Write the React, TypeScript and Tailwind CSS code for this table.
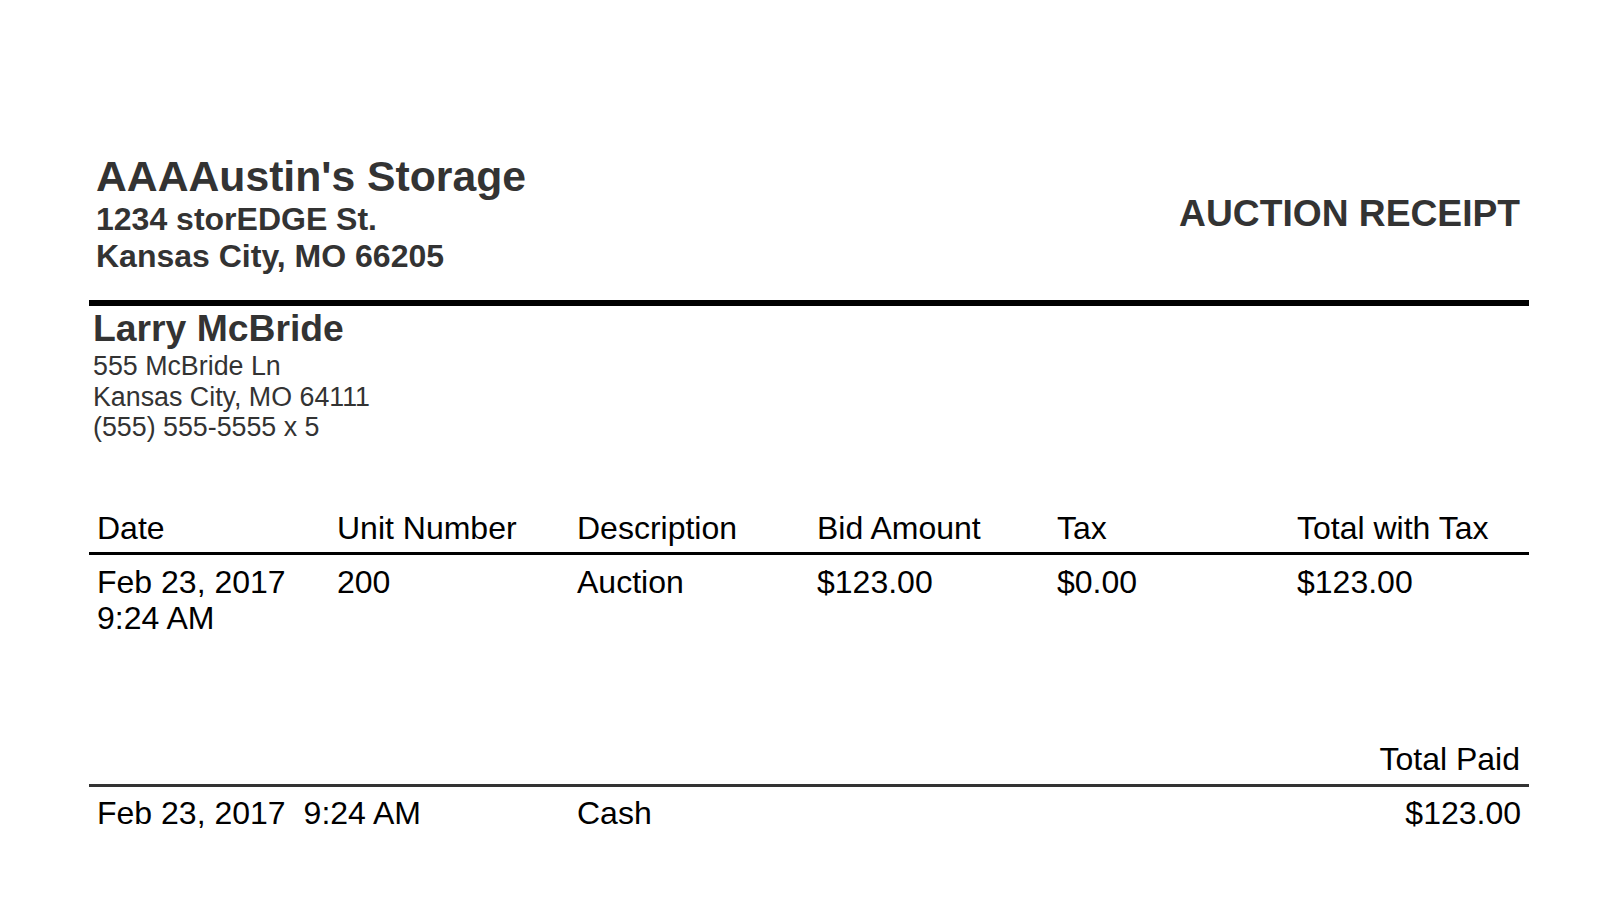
export default function App() {
  const headers = ['Date', 'Unit Number', 'Description', 'Bid Amount', 'Tax', 'Total with Tax'];

  const item = {
    date: 'Feb 23, 2017',
    time: '9:24 AM',
    unit: '200',
    description: 'Auction',
    bid: '$123.00',
    tax: '$0.00',
    total: '$123.00'
  };

  return (
    <div className="min-h-screen bg-white font-['Liberation_Sans',Arial,sans-serif] pl-[89px] pr-[87px] pt-[152px]">
      {/* facility header */}
      <div className="flex justify-between items-start">
        <div className="pl-[7px] text-[#333] font-bold">
          <h1 className="text-[42.7px] leading-[48px]">AAAAustin's Storage</h1>
          <div className="text-[32px] leading-[36.5px] mt-[1px]">1234 storEDGE St.</div>
          <div className="text-[32px] leading-[36.5px]">Kansas City, MO 66205</div>
        </div>
        <h2 className="mt-[41px] pr-[9px] text-[37.2px] leading-[40px] font-bold text-[#333]">AUCTION RECEIPT</h2>
      </div>

      {/* customer */}
      <div className="mt-[26px] border-t-[6px] border-black pl-[4px] pt-[2px] text-[#333]">
        <div className="text-[37.3px] leading-[40px] font-bold">Larry McBride</div>
        <div className="text-[26.8px] leading-[30.5px] mt-[3px]">
          <div>555 McBride Ln</div>
          <div>Kansas City, MO 64111</div>
          <div>(555) 555-5555 x 5</div>
        </div>
      </div>

      {/* items */}
      <div className="mt-[67px] text-[32px] leading-[36px] text-black">
        <div className="grid grid-cols-6 border-b-[3px] border-black pb-[6px]">
          {headers.map((h) => (
            <div key={h} className="px-[8px]">{h}</div>
          ))}
        </div>
        <div className="grid grid-cols-6 pt-[9px]">
          <div className="px-[8px]">
            <div>{item.date}</div>
            <div>{item.time}</div>
          </div>
          <div className="px-[8px]">{item.unit}</div>
          <div className="px-[8px]">{item.description}</div>
          <div className="px-[8px]">{item.bid}</div>
          <div className="px-[8px]">{item.tax}</div>
          <div className="px-[8px]">{item.total}</div>
        </div>
      </div>

      {/* payments */}
      <div className="mt-[105px] text-[32px] leading-[36px] text-black">
        <div className="border-b-[3px] border-[#333] pb-[7px] pr-[9px] text-right">Total Paid</div>
        <div className="grid grid-cols-6 pt-[8px]">
          <div className="col-span-2 px-[8px] flex gap-[18px]">
            <span>Feb 23, 2017</span>
            <span>9:24 AM</span>
          </div>
          <div className="px-[8px]">Cash</div>
          <div className="col-span-3 pr-[8px] text-right">$123.00</div>
        </div>
      </div>
    </div>
  );
}
